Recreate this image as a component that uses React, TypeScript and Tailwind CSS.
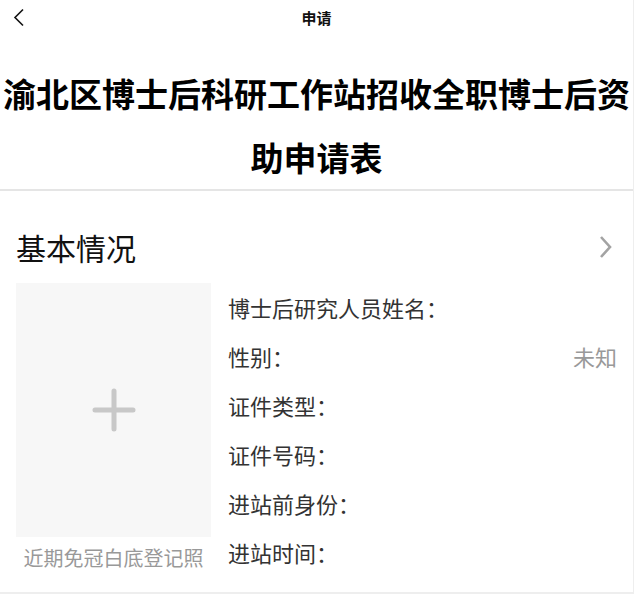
import React from 'react'

const fields = [
  { label: '博士后研究人员姓名：', value: '' },
  { label: '性别：', value: '未知' },
  { label: '证件类型：', value: '' },
  { label: '证件号码：', value: '' },
  { label: '进站前身份：', value: '' },
  { label: '进站时间：', value: '' },
]

const App: React.FC = () => {
  return (
    <div
      className="w-[634px] min-h-[594px] bg-white border-r border-[#eeeeee]"
      style={{ fontFamily: '"Noto Sans CJK SC", "Noto Sans", sans-serif' }}
    >
      {/* top bar */}
      <div className="grid grid-cols-[60px_1fr_60px] h-[34px] items-center">
        <button className="pl-[13px] flex items-center">
          <svg width="12" height="19" viewBox="0 0 12 19" fill="none">
            <path d="M10 1.5L2 9.5L10 17.5" stroke="#111" strokeWidth="1.6" />
          </svg>
        </button>
        <div className="text-center text-[15px] font-semibold text-[#111] leading-none">申请</div>
        <div />
      </div>

      {/* form title */}
      <div className="pt-[27px] text-center text-[33px] font-bold leading-[64px] text-black border-b-2 border-[#e5e5e5]">
        渝北区博士后科研工作站招收全职博士后资助申请表
      </div>

      {/* basic info */}
      <div className="px-4 pt-[28px] pb-[15px] border-b-2 border-[#eeeeee]">
        <div className="flex items-center justify-between h-[56px]">
          <span className="text-[30px] text-[#111]">基本情况</span>
          <svg width="16" height="24" viewBox="0 0 16 24" fill="none" className="mr-[3px]">
            <path d="M3 2L12 12L3 22" stroke="#a3a3a3" strokeWidth="2.6" />
          </svg>
        </div>

        <div className="flex mt-[8px] gap-[17px]">
          <div className="w-[195px] shrink-0 flex flex-col items-center">
            <div className="w-[195px] h-[254px] bg-[#f7f7f7] flex items-center justify-center">
              <svg width="44" height="44" viewBox="0 0 44 44">
                <path d="M22 3V41M3 22H41" stroke="#c8c8c8" strokeWidth="5" strokeLinecap="round" />
              </svg>
            </div>
            <div className="mt-[7px] text-[20px] leading-[28px] text-[#999999]">近期免冠白底登记照</div>
          </div>

          <div className="flex-1 flex flex-col">
            {fields.map((f) => (
              <div key={f.label} className="h-[49px] flex items-center justify-between text-[22px]">
                <span className="text-[#333333]">{f.label}</span>
                {f.value && <span className="text-[#999999]">{f.value}</span>}
              </div>
            ))}
          </div>
        </div>
      </div>
    </div>
  )
}

export default App
